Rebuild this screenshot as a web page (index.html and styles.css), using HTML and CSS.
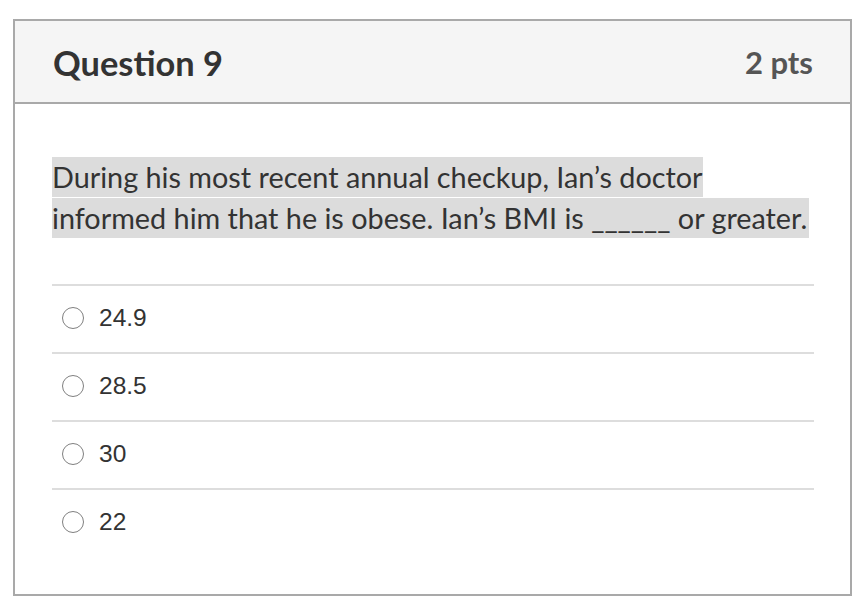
FILE: index.html
```html
<!DOCTYPE html>
<html>
<head>
<meta charset="utf-8">
<link rel="stylesheet" href="styles.css">
</head>
<body>
<div class="card">
  <div class="header">
    <h2 class="title">Question 9</h2>
    <div class="pts">2 pts</div>
  </div>
  <div class="content">
    <p class="question"><span class="hl">During his most recent annual checkup, Ian’s doctor informed him that he is obese. Ian’s BMI is ______ or greater.</span></p>
    <div class="answers">
      <div class="answer"><span class="radio"></span><span class="label">24.9</span></div>
      <div class="answer"><span class="radio"></span><span class="label">28.5</span></div>
      <div class="answer"><span class="radio"></span><span class="label">30</span></div>
      <div class="answer"><span class="radio"></span><span class="label">22</span></div>
    </div>
  </div>
</div>
</body>
</html>
```
FILE: styles.css
```css
html, body {
  margin: 0;
  padding: 0;
  background: #fff;
}
body {
  font-family: Lato, "Liberation Sans", sans-serif;
  color: #333;
}
.card {
  box-sizing: border-box;
  margin: 19px 0 0 13px;
  width: 839px;
  height: 577px;
  border: 2px solid #a9a9a9;
}
.header {
  box-sizing: border-box;
  height: 83px;
  background: #f5f5f5;
  border-bottom: 2px solid #a9a9a9;
  padding: 0 37px 0 38px;
  display: flex;
  align-items: center;
  justify-content: space-between;
}
.title {
  margin: 0;
  font-size: 34.4px;
  font-weight: 700;
  color: #333;
  line-height: 1;
  padding-top: 4px;
}
.pts {
  font-size: 31px;
  font-weight: 700;
  color: #555;
  line-height: 1;
  padding-top: 2px;
}
.content {
  padding: 53px 36px 0 37px;
}
.question {
  margin: 0 0 45px 0;
  font-size: 28.8px;
  line-height: 41px;
  color: #333;
}
.hl {
  background: #dcdcdc;
  padding: 3px 2px 3px 0;
}
.answers {
  display: flex;
  flex-direction: column;
}
.answer {
  box-sizing: border-box;
  height: 68px;
  border-top: 2px solid #dddddd;
  display: flex;
  align-items: center;
  padding-left: 10px;
  padding-bottom: 2px;
}
.radio {
  box-sizing: border-box;
  width: 22px;
  height: 22px;
  border: 1.6px solid #808080;
  border-radius: 50%;
  margin-right: 15px;
  flex: none;
}
.label {
  font-family: "Liberation Sans", Arial, sans-serif;
  font-size: 24.5px;
  color: #333;
  line-height: 1;
}
```
